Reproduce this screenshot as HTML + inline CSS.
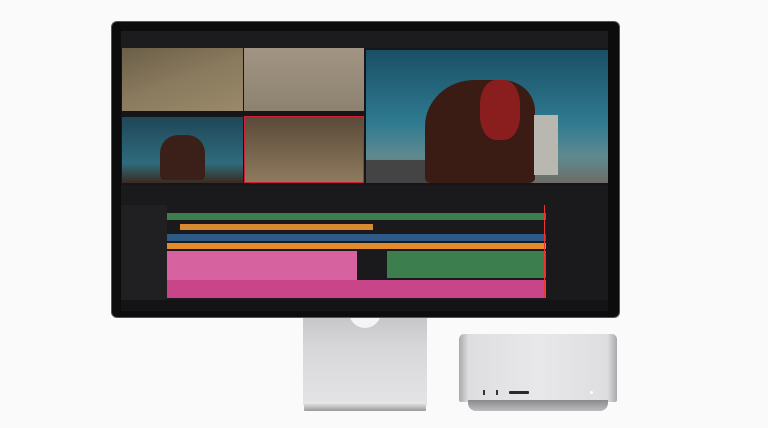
<!DOCTYPE html>
<html><head><style>
*{margin:0;padding:0;box-sizing:border-box}
body{width:768px;height:428px;background:#fafafa;position:relative;overflow:hidden;font-family:"Liberation Sans",sans-serif}
div{position:absolute}
</style></head><body>
<!-- stand -->
<div style="left:303px;top:312px;width:124px;height:94px;background:linear-gradient(#c4c4c6,#d8d8da 40%,#e4e4e6);border-radius:0 0 2px 2px"></div>
<div style="left:349px;top:310px;width:32px;height:18px;background:#f4f4f4;border-radius:0 0 16px 16px"></div>
<div style="left:304px;top:402px;width:122px;height:9px;background:linear-gradient(#f0f0f0,#9a9a9c);border-radius:1px"></div>
<!-- mac studio -->
<div style="left:459px;top:334px;width:158px;height:68px;background:linear-gradient(90deg,#a9a9ab,#dedee0 6%,#e8e8ea 50%,#dedee0 94%,#a9a9ab);border-radius:5px 5px 2px 2px"></div>
<div style="left:468px;top:400px;width:140px;height:11px;background:linear-gradient(#8a8a8c,#bcbcbe);border-radius:0 0 8px 8px"></div>
<div style="left:483px;top:390px;width:2px;height:5px;background:#333"></div>
<div style="left:496px;top:390px;width:2px;height:5px;background:#333"></div>
<div style="left:509px;top:391px;width:20px;height:3px;background:#2a2a2a;border-radius:1px"></div>
<div style="left:590px;top:391px;width:3px;height:3px;background:#fff;border-radius:50%"></div>
<!-- monitor -->
<div style="left:111px;top:21px;width:509px;height:297px;background:#0c0c0c;border-radius:6px;border:1px solid #555"></div>
<div style="left:121px;top:31px;width:487px;height:280px;background:#161618"></div>
<div style="left:121px;top:31px;width:487px;height:17px;background:#1c1c1e"></div>
<!-- multicam -->
<div style="left:122px;top:48px;width:121px;height:63px;background:linear-gradient(160deg,#6b5f48,#8a7a5e 50%,#9a8a6a)"></div>
<div style="left:244px;top:48px;width:120px;height:63px;background:linear-gradient(#a29483,#8d8270)"></div>
<div style="left:122px;top:117px;width:121px;height:66px;background:linear-gradient(#1f4758,#2e6b7c 70%,#3a2a20)"></div>
<div style="left:160px;top:135px;width:45px;height:45px;background:#3a2018;border-radius:40% 40% 10% 10%"></div>
<div style="left:244px;top:116px;width:120px;height:67px;background:linear-gradient(#5a4a38,#8e7a5e);border:1px solid #c23"></div>
<!-- big viewer -->
<div style="left:366px;top:50px;width:242px;height:133px;background:linear-gradient(#1a4f66,#2f7a90 55%,#5f8a90 80%,#6d6d66)"></div>
<div style="left:366px;top:160px;width:80px;height:23px;background:#444"></div>
<div style="left:425px;top:80px;width:110px;height:103px;background:#3b1c14;border-radius:45% 30% 5% 5%"></div>
<div style="left:480px;top:80px;width:40px;height:60px;background:#8a1e1e;border-radius:40%"></div>
<div style="left:534px;top:115px;width:24px;height:60px;background:#b8b8b0"></div>
<!-- timeline -->
<div style="left:121px;top:185px;width:487px;height:125px;background:#1a1a1c"></div>
<div style="left:121px;top:205px;width:46px;height:95px;background:#202022"></div>
<div style="left:167px;top:213px;width:379px;height:7px;background:#3d7e4e"></div>
<div style="left:180px;top:224px;width:193px;height:6px;background:#d88a30"></div>
<div style="left:167px;top:234px;width:379px;height:7px;background:#2d5a86"></div>
<div style="left:167px;top:243px;width:379px;height:6px;background:#e28a2c"></div>
<div style="left:167px;top:251px;width:190px;height:29px;background:#d663a0"></div>
<div style="left:387px;top:251px;width:159px;height:27px;background:#3d7e4e"></div>
<div style="left:167px;top:280px;width:379px;height:18px;background:#c8458a"></div>
<div style="left:544px;top:205px;width:1px;height:93px;background:#e33"></div>
<div style="left:121px;top:300px;width:487px;height:10px;background:#141416"></div>
</body></html>
